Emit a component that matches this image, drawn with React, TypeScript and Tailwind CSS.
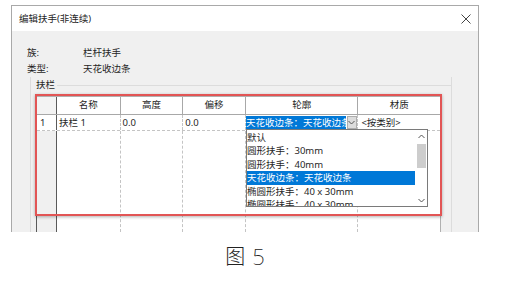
import React from 'react';

const font = { fontFamily: '"Noto Sans", "Noto Sans CJK SC", sans-serif' };

const cols = [20, 64, 63, 63, 113, 82];

const listItems = [
  '默认',
  '圆形扶手：30mm',
  '圆形扶手：40mm',
  '天花收边条：天花收边条',
  '椭圆形扶手：40 x 30mm',
  '椭圆形扶手：40 x 30mm',
];

const Chevron = ({ up = false }: { up?: boolean }) => (
  <svg width="7" height="5" viewBox="0 0 7 5" className="block">
    <path
      d={up ? 'M0.5 4 L3.5 1 L6.5 4' : 'M0.5 1 L3.5 4 L6.5 1'}
      fill="none"
      stroke="#555"
      strokeWidth="1"
    />
  </svg>
);

export default function App() {
  const headers = ['', '名称', '高度', '偏移', '轮廓', '材质'];

  return (
    <div className="relative w-[509px] h-[288px] bg-white overflow-hidden text-[#1f1f1f]" style={font}>
      {/* Dialog */}
      <div className="ml-[11px] mt-[5px] w-[468px] h-[227px] border-t border-l border-r border-[#a9a9a9] flex flex-col overflow-hidden">
        <div className="h-[25px] bg-white flex items-center justify-between pl-[7px] pr-[7px] shrink-0">
          <span className="text-[9.5px] leading-none">编辑扶手(非连续)</span>
          <svg width="10" height="10" viewBox="0 0 10 10">
            <path d="M0.5 0.5 L9.5 9.5 M9.5 0.5 L0.5 9.5" stroke="#444" strokeWidth="1" />
          </svg>
        </div>

        <div className="flex-1 bg-[#f0f0f0] flex flex-col pt-[14px]">
          <div className="pl-[15px] text-[9.5px] leading-[16px]">
            <div className="flex">
              <span className="w-[56px]">族:</span>
              <span>栏杆扶手</span>
            </div>
            <div className="flex">
              <span className="w-[56px]">类型:</span>
              <span>天花收边条</span>
            </div>
          </div>

          {/* Group box */}
          <div className="ml-[18px] w-[422px] flex-1 flex flex-col border-l border-r border-[#dcdcdc]">
            <div className="flex items-center h-[16px] -ml-px">
              <span className="pl-[6px] pr-[2px] text-[9.5px] leading-[16px]">扶栏</span>
              <div className="flex-1 h-px bg-[#dcdcdc]" />
            </div>

            <div className="ml-[5px] mt-[3px] w-[405px] flex-1 flex flex-col bg-white border-l border-[#5a5a5a] border-r border-r-[#b0b0b0] border-t border-t-[#b0b0b0] text-[9.5px]">
              {/* Header */}
              <div className="flex h-[18px] border-b border-[#a8a8a8] shrink-0">
                {headers.map((h, i) => (
                  <div
                    key={i}
                    style={{ width: cols[i] }}
                    className={`flex items-center justify-center border-r ${
                      i === 0 ? 'bg-[#f3f3f3] border-[#5a5a5a]' : 'border-[#a8a8a8]'
                    } ${i === 5 ? 'border-r-0' : ''}`}
                  >
                    {h}
                  </div>
                ))}
              </div>

              {/* Row 1 */}
              <div className="flex h-[16px] border-b border-dashed border-[#c4c4c4] shrink-0 leading-[16px]">
                <div style={{ width: cols[0] }} className="pl-[3px] border-r border-[#5a5a5a]">1</div>
                <div style={{ width: cols[1] }} className="pl-[2px] border-r border-dashed border-[#c4c4c4]">扶栏 1</div>
                <div style={{ width: cols[2] }} className="pl-[2px] border-r border-dashed border-[#c4c4c4]">0.0</div>
                <div style={{ width: cols[3] }} className="pl-[2px] border-r border-dashed border-[#c4c4c4]">0.0</div>
                <div style={{ width: cols[4] }} className="flex items-center border-r border-dashed border-[#c4c4c4]">
                  <span className="bg-[#0078d7] text-white w-[100px] h-[14px] leading-[14px] whitespace-nowrap overflow-hidden">
                    天花收边条：天花收边条
                  </span>
                  <span className="ml-px w-[10px] h-[13px] bg-[#dcdcdc] border border-[#adadad] flex items-center justify-center">
                    <Chevron />
                  </span>
                </div>
                <div style={{ width: cols[5] }} className="pl-[3px]">&lt;按类别&gt;</div>
              </div>

              {/* Empty rows */}
              <div className="flex flex-1">
                {cols.map((w, i) => (
                  <div
                    key={i}
                    style={{ width: w }}
                    className={
                      i === 0
                        ? 'bg-[#f0f0f0] border-r border-[#5a5a5a]'
                        : i === 5
                        ? ''
                        : 'border-r border-dashed border-[#c4c4c4]'
                    }
                  />
                ))}
              </div>
            </div>
          </div>
        </div>
      </div>

      {/* Caption */}
      <div className="ml-[11px] w-[468px] mt-[13px] flex justify-center items-center gap-[7px] font-extralight text-[#222] leading-none">
        <span style={{ fontFamily: '"Noto Sans CJK SC", sans-serif' }} className="text-[20px]">图</span>
        <span style={{ fontFamily: '"Noto Sans", sans-serif' }} className="text-[22px]">5</span>
      </div>

      {/* Dropdown list */}
      <div className="absolute left-[246px] top-[129px] w-[182px] h-[78px] bg-white border border-[#7a7a7a] flex text-[9.5px] overflow-hidden">
        <div className="flex-1 pt-px">
          {listItems.map((t, i) => (
            <div
              key={i}
              className={`h-[13.4px] leading-[13.4px] whitespace-nowrap ${
                i === 3 ? 'bg-[#0078d7] text-white' : ''
              }`}
            >
              {t}
            </div>
          ))}
        </div>
        <div className="w-[12px] flex flex-col items-center bg-white">
          <div className="h-[12px] flex items-center justify-center">
            <Chevron up />
          </div>
          <div className="w-[9px] h-[24px] bg-[#cdcdcd] mt-[2px]" />
          <div className="flex-1" />
          <div className="h-[12px] flex items-center justify-center">
            <Chevron />
          </div>
        </div>
      </div>

      {/* Red annotation box */}
      <div className="absolute left-[35px] top-[94px] w-[407px] h-[122px] border-2 border-[#e25555] shadow-[0_1px_3px_rgba(0,0,0,0.3)]" />
    </div>
  );
}
